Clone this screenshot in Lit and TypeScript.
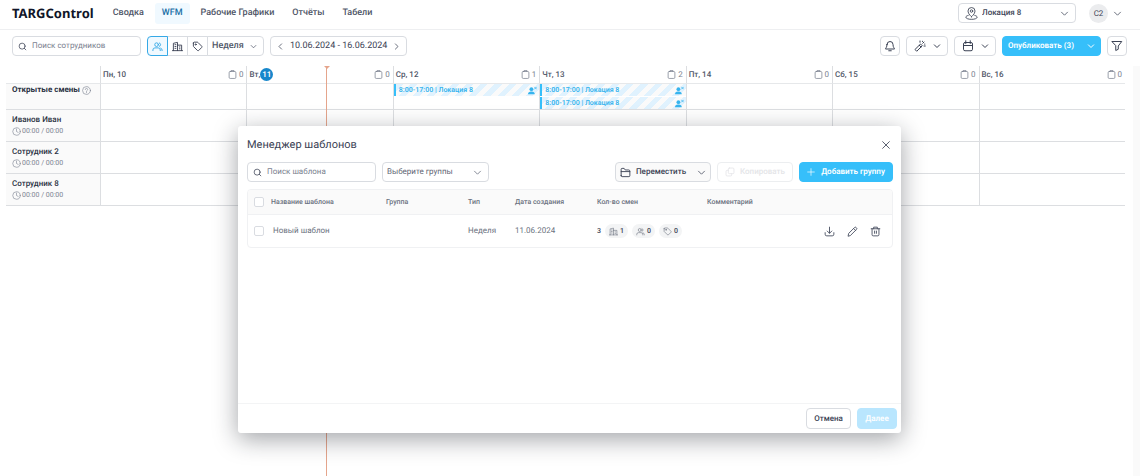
import { LitElement, html, css, svg, nothing, TemplateResult } from "lit";
import { customElement, property, state } from "lit/decorators.js";
import { classMap } from "lit/directives/class-map.js";
import { styleMap } from "lit/directives/style-map.js";

const ICONS: Record<string, TemplateResult> = {
  search: svg`<circle cx="11" cy="11" r="8"/><path d="M21 21l-4.3-4.3"/>`,
  users: svg`<circle cx="10" cy="8" r="4"/><path d="M2 21v-1.5A4.5 4.5 0 0 1 6.500 15h7a4.500 4.500 0 0 1 4.500 4.500V21"/><path d="M16 4.200a4 4 0 0 1 0 7.600"/><path d="M19 15.500a4.500 4.500 0 0 1 3 4V21"/>`,
  building: svg`<path d="M3 21V5l9-2v18M12 9h9v12M1 21h22"/><path d="M6.500 8h2M6.500 12h2M6.500 16h2M16 13h1.500M16 17h1.500"/>`,
  tag: svg`<path d="M3 4.500V11a2 2 0 0 0 .6 1.400l8.300 8.300a1.900 1.900 0 0 0 2.700 0l6.600-6.600a1.900 1.900 0 0 0 0-2.700L12.900 3.100a2 2 0 0 0-1.400-.6H5a2 2 0 0 0-2 2z"/><circle cx="8" cy="7.500" r="1.300"/>`,
  down: svg`<path d="M4 8.500l8 8 8-8"/>`,
  left: svg`<path d="M15 5l-7 7 7 7"/>`,
  right: svg`<path d="M9 5l7 7-7 7"/>`,
  bell: svg`<path d="M6 9a6 6 0 0 1 12 0c0 6 3 7 3 9H3c0-2 3-3 3-9z"/><path d="M9.500 21.500h5"/>`,
  wand: svg`<path d="M2.500 18.500L13 8l3.500 3.500L6 22z"/><path d="M10.500 10.500L14 14"/><path d="M12 2v2.500M17.500 6.500L20 4M20 12h2.500M17 2.500v.5M21.500 8v.5"/>`,
  calendar: svg`<rect x="3" y="5" width="18" height="16.500" rx="3"/><path d="M3 11h18M7.500 1.500V7M16.500 1.500V7"/>`,
  funnel: svg`<path d="M2.500 3h19L14.500 12v6.500l-5 2.500v-9z"/>`,
  pin: svg`<path d="M12 18S5.500 13 5.500 7.500a6.500 6.500 0 0 1 13 0C18.500 13 12 18 12 18z"/><circle cx="12" cy="7.500" r="2.300"/><path d="M6 15.500c-3 .8-4.500 2-4.500 3.300C1.500 21 6 22.800 12 22.800s10.500-1.800 10.500-4c0-1.300-1.500-2.500-4.500-3.300"/>`,
  clipboard: svg`<rect x="3" y="4" width="18" height="18.500" rx="3"/><path d="M8 4V1.500h8V4"/>`,
  help: svg`<circle cx="12" cy="12" r="10.500"/><path d="M8.800 9.300a3.200 3.200 0 1 1 4.700 2.900c-1 .6-1.500 1.100-1.500 2.300M12 17.300v.7"/>`,
  clock: svg`<circle cx="12" cy="12" r="10"/><path d="M12 5.500V12l4.500 2.500"/>`,
  folder: svg`<path d="M2.500 19V5a2 2 0 0 1 2-2H9l2.500 3.500H19a2.500 2.500 0 0 1 2.500 2.500v10a2 2 0 0 1-2 2h-15a2 2 0 0 1-2-2zM2.500 10h19"/>`,
  copy: svg`<rect x="8" y="2.500" width="13.500" height="13.500" rx="2.500"/><path d="M16 16v3a2.500 2.500 0 0 1-2.500 2.500H5A2.500 2.500 0 0 1 2.500 19v-8.500A2.500 2.500 0 0 1 5 8h3"/>`,
  plus: svg`<path d="M12 2v20M2 12h20"/>`,
  download: svg`<path d="M12 2.500v13M7 11l5 5 5-5M2.500 14.500V18A3.500 3.500 0 0 0 6 21.500h12a3.500 3.500 0 0 0 3.500-3.500v-3.500"/>`,
  pencil: svg`<path d="M2.500 21.500l1.200-5.400L16.500 3.300a2.400 2.400 0 0 1 3.400 0l.8.8a2.400 2.400 0 0 1 0 3.400L7.900 20.300z"/><path d="M14.500 5.500l4 4"/>`,
  trash: svg`<path d="M2.500 6h19M8 6V2.500h8V6M4.500 6v13A2.500 2.500 0 0 0 7 21.500h10a2.500 2.500 0 0 0 2.500-2.500V6M10 11v5M14 11v5"/>`,
  close: svg`<path d="M4 4l16 16M20 4L4 20"/>`,
  vacant: svg`<circle cx="9" cy="8.500" r="5" fill="currentColor" stroke="none"/><path d="M0 22c0-5 3-7.500 9-7.500s9 2.500 9 7.500z" fill="currentColor" stroke="none"/><path d="M17.500 3l5 5M22.500 3l-5 5"/>`,
};

type Shift = { time: string; place: string };
type Day = { name: string; date: number; count: number; today?: boolean; shifts: Shift[] };

const SHIFT: Shift = { time: "8:00-17:00", place: "Локация 8" };
const DAYS: Day[] = [
  { name: "Пн", date: 10, count: 0, shifts: [] },
  { name: "Вт", date: 11, count: 0, today: true, shifts: [] },
  { name: "Ср", date: 12, count: 1, shifts: [SHIFT] },
  { name: "Чт", date: 13, count: 2, shifts: [SHIFT, SHIFT] },
  { name: "Пт", date: 14, count: 0, shifts: [] },
  { name: "Сб", date: 15, count: 0, shifts: [] },
  { name: "Вс", date: 16, count: 0, shifts: [] },
];
const EMPLOYEES = ["Иванов Иван", "Сотрудник 2", "Сотрудник 8"];
const NAV = ["Сводка", "WFM", "Рабочие Графики", "Отчёты", "Табели"];
/* Share of the week that has passed */
const NOW = 0.2205;

const base = css`
  :host, * { box-sizing: border-box; }
  button, input, select { font: inherit; color: inherit; margin: 0; text-rendering: inherit; }
  button { cursor: pointer; padding: 0; background: none; border: 0; }
  .box {
    display: inline-flex; align-items: center; justify-content: center;
    height: 20px; border: 1px solid #d9dce1; border-radius: 4px; background: #fff;
  }
  .primary { background: #36bffa; border-color: #36bffa; color: #fff; font-weight: 600; }
  .field { justify-content: flex-start; gap: 5px; padding: 0 5px; }
  .field input { flex: 1; min-width: 0; border: 0; padding: 0; outline: 0; background: none; font-size: 8px; color: #4a5162; }
  .field input::placeholder { color: #7b8290; opacity: 1; }
  .pick { position: relative; }
  .pick select {
    appearance: none; border: 0; background: none; outline: 0; flex: 1; min-width: 0; height: 16px;
    padding: 0 14px 0 4px;
  }
  .pick .arrow { position: absolute; right: 6px; pointer-events: none; }
  table { border-collapse: separate; border-spacing: 0; table-layout: fixed; width: 100%; }
  th, td { padding: 0; text-align: left; font-weight: 400; }
`;

@customElement("ui-icon")
class UiIcon extends LitElement {
  @property() name = "";
  @property({ type: Number }) size = 10;
  @property({ type: Number }) weight = 2;
  static styles = css`
    :host { display: inline-flex; flex: none; }
    svg { display: block; fill: none; stroke: currentColor; stroke-linecap: round; stroke-linejoin: round; }
  `;
  render() {
    return html`<svg viewBox="0 0 24 24" width=${this.size} height=${this.size} stroke-width=${this.weight} aria-hidden="true">${ICONS[this.name]}</svg>`;
  }
}

@customElement("top-bar")
class TopBar extends LitElement {
  static styles = [base, css`
    :host { display: flex; align-items: flex-start; height: 30px; padding: 3px 18px 0 12px; border-bottom: 1px solid #eeeff1; }
    .logo { font: 700 13px/20px "Noto Sans", sans-serif; color: #101528; margin-right: 12px; }
    nav { display: flex; gap: 4px; }
    nav a { padding: 0 7px; line-height: 21px; border-radius: 3px; color: #4f5667; text-decoration: none; font-weight: 500; white-space: nowrap; }
    nav a.on { background: #f0f9ff; color: #1a6fa6; }
    .end { margin-left: auto; display: flex; align-items: center; }
    .place { width: 118px; padding-left: 6px; font-size: 8px; font-weight: 500; }
    .avatar { width: 19px; height: 19px; border-radius: 50%; background: #ebecee; line-height: 19px; text-align: center; font-size: 8px; margin-left: 13px; }
    .more { margin-left: 4px; display: flex; padding: 0 0 0 1px; }
  `];
  render() {
    return html`
      <div class="logo">TARGControl</div>
      <nav>${NAV.map((n) => html`<a href="#" class=${classMap({ on: n === "WFM" })}>${n}</a>`)}</nav>
      <div class="end">
        <label class="box pick place">
          <ui-icon name="pin" size="13" weight="1.6"></ui-icon>
          <select aria-label="Локация"><option>Локация 8</option></select>
          <ui-icon class="arrow" name="down" size="9"></ui-icon>
        </label>
        <div class="avatar">С2</div>
        <button class="more" aria-label="Профиль"><ui-icon name="down" size="9"></ui-icon></button>
      </div>`;
  }
}

@customElement("tool-bar")
class ToolBar extends LitElement {
  static styles = [base, css`
    :host { display: flex; gap: 6px; padding: 6px 13px 10px 12px; }
    .find { width: 129px; }
    .group { display: flex; }
    .group .box { width: 21px; margin-right: -1px; border-radius: 0; }
    .group .box:first-child { border-radius: 4px 0 0 4px; }
    .group .box.on { border-color: #36a9e6; background: #f0f9ff; color: #36a9e6; z-index: 1; }
    .group .box.unit { width: 57px; margin: 0; border-radius: 0 4px 4px 0; font-weight: 500; color: #4f5667; }
    .dates { padding: 0 5px; gap: 5px; font-weight: 400; white-space: nowrap; }
    .dates button { display: flex; }
    .end { margin-left: auto; display: flex; gap: 6px; }
    .sq { width: 20px; }
    .menu { width: 42px; gap: 7px; }
    .publish { width: 99px; font-size: 8px; gap: 13px; white-space: nowrap; }
  `];
  render() {
    return html`
      <label class="box field find"><ui-icon name="search" size="9"></ui-icon><input placeholder="Поиск сотрудников" aria-label="Поиск сотрудников" /></label>
      <div class="group">
        <button class="box on" aria-label="Сотрудники"><ui-icon name="users" size="11"></ui-icon></button>
        <button class="box" aria-label="Локации"><ui-icon name="building" size="11"></ui-icon></button>
        <button class="box" aria-label="Метки"><ui-icon name="tag" size="11"></ui-icon></button>
        <label class="box pick unit"><select aria-label="Период"><option>Неделя</option></select><ui-icon class="arrow" name="down" size="7" weight="2.5"></ui-icon></label>
      </div>
      <div class="box dates">
        <button aria-label="Назад"><ui-icon name="left" size="9"></ui-icon></button>
        <span>10.06.2024 - 16.06.2024</span>
        <button aria-label="Вперёд"><ui-icon name="right" size="9"></ui-icon></button>
      </div>
      <div class="end">
        <button class="box sq" aria-label="Уведомления"><ui-icon name="bell" size="12"></ui-icon></button>
        <button class="box menu" aria-label="Автозаполнение"><ui-icon name="wand" size="12"></ui-icon><ui-icon name="down" size="8" weight="3"></ui-icon></button>
        <button class="box menu" aria-label="Календарь"><ui-icon name="calendar" size="12"></ui-icon><ui-icon name="down" size="8" weight="3"></ui-icon></button>
        <button class="box primary publish">Опубликовать (3)<ui-icon name="down" size="8" weight="3"></ui-icon></button>
        <button class="box sq" aria-label="Фильтр"><ui-icon name="funnel" size="12"></ui-icon></button>
      </div>`;
  }
}

@customElement("week-schedule")
class WeekSchedule extends LitElement {
  static styles = [base, css`
    :host { display: flex; flex: 1; padding-left: 6px; }
    .grid { flex: 1; position: relative; overflow: hidden; }
    .gutter { width: 7px; margin-left: 8px; background: #fafafa; }
    .side { width: 94px; }
    th, td { border-bottom: 1px solid #dcdee1; border-left: 1px solid #dcdee1; vertical-align: top; }
    tr > :first-child { border-left: 0; padding-left: 6px; }
    thead th { height: 18px; border-bottom-color: #e6e8ea; vertical-align: middle; }
    tbody th { background: #fafafa; color: #2b3243; font-size: 8px; font-weight: 500; }
    .day { display: flex; align-items: center; padding: 0 3px 0 2px; font-size: 8px; font-weight: 500; color: #4f5667; }
    .badge { width: 13px; height: 13px; border-radius: 50%; background: #1787cb; color: #fff; line-height: 13px; text-align: center; font-weight: 600; }
    .num { margin-left: auto; display: flex; align-items: center; gap: 2px; color: #7b8290; font-weight: 400; }
    .open th, .open td { height: 26px; }
    .open th { font-weight: 700; }
    .title { display: flex; align-items: center; gap: 2px; line-height: 12px; white-space: nowrap; }
    .title ui-icon, .hours { color: #7b8290; }
    .person th { height: 32px; padding-top: 5px; line-height: 10px; }
    .hours { display: flex; align-items: center; gap: 1px; font-size: 7px; line-height: 13px; font-weight: 400; }
    .shift {
      display: flex; align-items: center; justify-content: space-between; height: 12px; padding: 0 2px 0 3px;
      border-left: 2px solid #36bffa; color: #36b4ee; font-size: 7px; font-weight: 600; white-space: nowrap;
      background: repeating-linear-gradient(135deg, #e0f2fe 0 5px, #fafafa 5px 10px);
    }
    .shift + .shift { margin-top: 1px; }
    .now { position: absolute; top: 0; bottom: 0; width: 1px; background: #e5a58c; }
    .now::before { content: ""; position: absolute; top: 0; left: -2px; border: solid transparent; border-width: 3px 3px 0; border-top-color: #e5a58c; }
  `];
  render() {
    const now = { left: `calc(94px + (100% - 94px) * ${NOW})` };
    return html`
      <div class="grid">
        <table>
          <colgroup><col class="side" />${DAYS.map(() => html`<col />`)}</colgroup>
          <thead><tr><th></th>${DAYS.map((d) => html`
            <th><div class="day">${d.today ? html`${d.name}, <span class="badge">${d.date}</span>` : `${d.name}, ${d.date}`}
              <span class="num"><ui-icon name="clipboard" size="9"></ui-icon>${d.count}</span></div></th>`)}</tr></thead>
          <tbody>
            <tr class="open"><th><div class="title">Открытые смены<ui-icon name="help" size="9" weight="1.6"></ui-icon></div></th>
              ${DAYS.map((d) => html`<td>${d.shifts.map((s) => html`<div class="shift">${s.time} | ${s.place}<ui-icon name="vacant" size="9"></ui-icon></div>`)}</td>`)}</tr>
            ${EMPLOYEES.map((e) => html`<tr class="person"><th>${e}<div class="hours"><ui-icon name="clock" size="9" weight="1.6"></ui-icon>00:00 / 00:00</div></th>${DAYS.map(() => html`<td></td>`)}</tr>`)}
          </tbody>
        </table>
        <div class="now" style=${styleMap(now)}></div>
      </div>
      <div class="gutter"></div>`;
  }
}

@customElement("template-manager")
class TemplateManager extends LitElement {
  @state() private opened = true;
  static styles = [base, css`
    :host { position: absolute; top: 126px; left: 0; right: 1px; display: flex; justify-content: center; pointer-events: none; }
    .dialog {
      pointer-events: auto; display: flex; flex-direction: column; width: 58%; min-width: 663px; min-height: 307px;
      background: #fff; border-radius: 3px; box-shadow: 0 6px 24px rgba(20, 24, 36, 0.4);
    }
    .head { display: flex; align-items: center; justify-content: space-between; padding: 11px 9px 0; }
    h2 { margin: 0; font-size: 11px; line-height: 16px; font-weight: 400; color: #3b4254; }
    .close { width: 12px; height: 12px; display: grid; place-items: center; }
    .tools { display: flex; gap: 6px; padding: 9px 8px 0 9px; font-size: 8px; }
    .find { width: 129px; }
    .groups { width: 107px; color: #5f6675; }
    .move { margin-left: auto; width: 96px; gap: 5px; background: #fafafa; font-weight: 500; }
    .move ui-icon:last-child { margin-left: 6px; }
    .copy { width: 76px; gap: 5px; color: #e4e5e8; border-color: #eceef0; font-weight: 500; cursor: default; }
    .add { width: 94px; gap: 6px; white-space: nowrap; }
    .list { margin: 7px 8px 0 9px; border: 1px solid #f0f1f3; border-radius: 4px; overflow: hidden; color: #6b7280; }
    .list th { height: 25px; background: #fafafa; border-bottom: 1px solid #f0f1f3; font-size: 7px; font-weight: 500; }
    .list td { height: 32px; font-size: 8px; }
    .c-check { width: 23px; } .c-name { width: 115px; } .c-group { width: 82px; } .c-type { width: 47px; }
    .c-date { width: 82px; } .c-count { width: 110px; } .c-act { width: 76px; }
    .list .tick { padding-left: 6px; }
    .tick input { display: block; appearance: none; width: 10px; height: 10px; border: 1px solid #d9dce1; border-radius: 2px; background: #fff; }
    .tick input:checked { background: #36bffa; }
    td.name { padding-left: 2px; }
    .counts { display: flex; align-items: center; gap: 4px; color: #3b4254; font-size: 7px; font-weight: 500; }
    .pill { display: flex; align-items: center; gap: 2px; height: 14px; padding: 0 4px; border-radius: 7px; background: #f3f4f5; }
    .pill ui-icon { color: #6b7280; }
    .acts { display: flex; gap: 12px; padding-left: 8px; color: #4a5162; }
    .acts button { display: flex; }
    .foot { margin-top: auto; display: flex; justify-content: flex-end; gap: 6px; padding: 4px; border-top: 1px solid #f3f4f5; font-size: 8px; font-weight: 500; }
    .foot .box { height: 21px; width: 45px; }
    .foot .next { width: 40px; background: #b9e6fe; border-color: #b9e6fe; cursor: default; }
  `];
  render() {
    if (!this.opened) return nothing;
    const close = () => (this.opened = false);
    const pill = (icon: string, n: number) => html`<span class="pill"><ui-icon name=${icon} size="9" weight="1.6"></ui-icon>${n}</span>`;
    return html`
      <section class="dialog" role="dialog" aria-labelledby="title">
        <div class="head"><h2 id="title">Менеджер шаблонов</h2><button class="close" aria-label="Закрыть" @click=${close}><ui-icon name="close" size="10"></ui-icon></button></div>
        <div class="tools">
          <label class="box field find"><ui-icon name="search" size="9"></ui-icon><input placeholder="Поиск шаблона" aria-label="Поиск шаблона" /></label>
          <label class="box pick groups"><select aria-label="Группы"><option>Выберите группы</option></select><ui-icon class="arrow" name="down" size="9"></ui-icon></label>
          <button class="box move"><ui-icon name="folder" size="11"></ui-icon>Переместить<ui-icon name="down" size="9"></ui-icon></button>
          <button class="box copy" disabled><ui-icon name="copy" size="10"></ui-icon>Копировать</button>
          <button class="box primary add"><ui-icon name="plus" size="8"></ui-icon>Добавить группу</button>
        </div>
        <div class="list">
          <table>
            <colgroup><col class="c-check" /><col class="c-name" /><col class="c-group" /><col class="c-type" /><col class="c-date" /><col class="c-count" /><col /><col class="c-act" /></colgroup>
            <thead><tr><th class="tick"><input type="checkbox" aria-label="Выбрать все" /></th><th>Название шаблона</th><th>Группа</th><th>Тип</th><th>Дата создания</th><th>Кол-во смен</th><th>Комментарий</th><th></th></tr></thead>
            <tbody><tr>
              <td class="tick"><input type="checkbox" aria-label="Новый шаблон" /></td>
              <td class="name">Новый шаблон</td><td></td><td>Неделя</td><td>11.06.2024</td>
              <td><div class="counts">3 ${pill("building", 1)}${pill("users", 0)}${pill("tag", 0)}</div></td><td></td>
              <td><div class="acts">
                <button aria-label="Скачать"><ui-icon name="download" size="11"></ui-icon></button>
                <button aria-label="Изменить"><ui-icon name="pencil" size="11"></ui-icon></button>
                <button aria-label="Удалить"><ui-icon name="trash" size="11"></ui-icon></button>
              </div></td>
            </tr></tbody>
          </table>
        </div>
        <div class="foot"><button class="box" @click=${close}>Отмена</button><button class="box primary next" disabled>Далее</button></div>
      </section>`;
  }
}

@customElement("app-root")
class AppRoot extends LitElement {
  static styles = css`
    :host {
      display: flex; flex-direction: column; position: relative; min-height: 100vh; overflow: hidden;
      background: #fff; color: #3b4254; font: 9px/12px Roboto, "Liberation Sans", sans-serif;
      text-rendering: geometricPrecision;
    }
  `;
  render() {
    return html`<top-bar></top-bar><tool-bar></tool-bar><week-schedule></week-schedule><template-manager></template-manager>`;
  }
}
